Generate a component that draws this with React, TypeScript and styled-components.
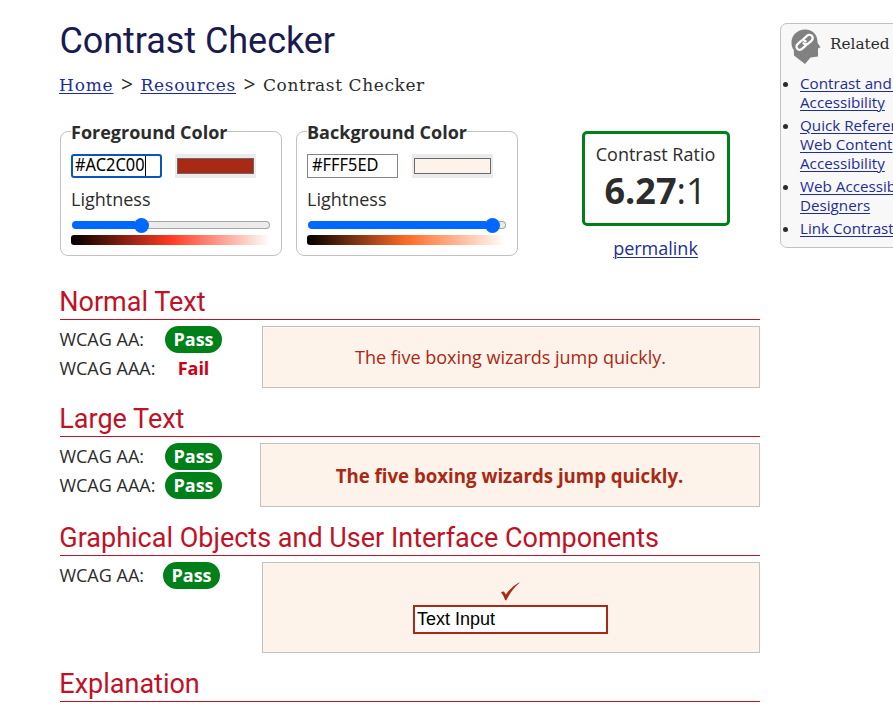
import React from "react";
import styled, { createGlobalStyle } from "styled-components";

const GlobalStyle = createGlobalStyle`
  * { box-sizing: border-box; }
  html, body { margin: 0; background: #fff; overflow: hidden; }
  body { font-family: "Open Sans", sans-serif; font-size: 18px; color: #2c2c2c; }
`;

const Page = styled.div`
  width: 893px;
  height: 712px;
  overflow: hidden;
  display: flex;
  align-items: flex-start;
  gap: 20px;
  padding-left: 60px;
`;
const Main = styled.main`
  flex: 0 0 700px;
`;
const Title = styled.h1`
  margin: 0;
  padding-top: 20px;
  font: 400 36px/42px Roboto, sans-serif;
  color: #1a1a50;
  white-space: nowrap;
  height: 72px;
  letter-spacing: -0.05px;
  text-indent: -0.6px;
`;
const Breadcrumb = styled.nav`
  height: 48px;
  font: 400 17px/26px "DejaVu Serif", serif;
  white-space: nowrap;
  display: flex;
  gap: 7px;
  margin-left: -1px;
`;
const Link = styled.a`
  color: #1f2d96;
  text-decoration: underline;
  text-decoration-thickness: 1px;
  text-underline-offset: 2px;
`;
const Crumb = styled.span<{ $spacing: number }>`
  letter-spacing: ${(p) => p.$spacing}px;
`;
const Separator = styled.span`
  width: 13px;
  text-align: center;
  font: 400 21px/25px "Open Sans", sans-serif;
`;
const Controls = styled.div`
  display: flex;
  align-items: flex-start;
  height: 168px;
`;
const ColorField = styled.fieldset`
  margin: 0 14px 0 0;
  width: 222px;
  height: 136px;
  min-width: 0;
  padding: 0 10px;
  border: 1px solid #c2c2c2;
  border-radius: 8px;
`;
const Legend = styled.legend`
  padding: 0;
  font-weight: 700;
  line-height: 24px;
  height: 23px;
  white-space: nowrap;
`;
const InputRow = styled.div<{ $gap: number }>`
  display: flex;
  gap: ${(p) => p.$gap}px;
  padding-top: 11px;
`;
const HexInput = styled.div<{ $focused?: boolean }>`
  width: 91px;
  height: 24px;
  padding-left: ${(p) => (p.$focused ? 2 : 4)}px;
  border: ${(p) => (p.$focused ? "2px solid #0a55bd" : "1px solid #858585")};
  border-radius: ${(p) => (p.$focused ? 3 : 0)}px;
  color: #000;
  font: 400 18px/${(p) => (p.$focused ? 17 : 19)}px "Noto Sans", sans-serif;
  white-space: nowrap;
  display: flex;
`;
const HexText = styled.span`
  display: inline-block;
  transform: scaleX(0.91);
  transform-origin: 0 50%;
`;
const Caret = styled.span<{ $offset: number }>`
  width: 1px;
  height: 20px;
  margin-left: ${(p) => p.$offset}px;
  background: #000;
`;
const Swatch = styled.div`
  width: 81px;
  height: 24px;
  padding: 4px 2px;
  background: #ebebeb;
`;
const SwatchFill = styled.div<{ $color: string }>`
  height: 16px;
  border: 1px solid #6a6a6a;
  background: ${(p) => p.$color};
`;
const Label = styled.div`
  height: 39px;
  padding-top: 9px;
  line-height: 24px;
`;
const Slider = styled.div`
  display: flex;
  align-items: center;
  height: 16px;
  margin-left: 1px;
  width: 198px;
`;
const Filled = styled.div<{ $width: number }>`
  width: ${(p) => p.$width}px;
  height: 8px;
  border-radius: 4px 0 0 4px;
  background: #0067ff;
`;
const Thumb = styled.div`
  width: 15px;
  height: 15px;
  margin: 0 -1px;
  border-radius: 50%;
  background: #0067ff;
  z-index: 1;
`;
const Rest = styled.div`
  flex: 1;
  height: 8px;
  border: 1px solid #a6a6a6;
  border-left: 0;
  border-radius: 0 4px 4px 0;
  background: #ebebeb;
`;
const Gradient = styled.div<{ $mid: string }>`
  width: 199px;
  height: 10px;
  margin-top: 2px;
  border-radius: 3px;
  background: linear-gradient(to right, #000, ${(p) => p.$mid} 50%, #fff);
`;
const RatioColumn = styled.div`
  width: 148px;
  margin: 11px 0 0 50px;
  text-align: center;
`;
const RatioBox = styled.div`
  height: 95px;
  border: 3px solid #008019;
  border-radius: 5px;
  padding: 8px 1px 0 0;
  line-height: 24px;
  white-space: nowrap;
`;
const RatioValue = styled.div`
  font-size: 36px;
  line-height: 49px;
`;
const Permalink = styled(Link)`
  display: block;
  margin: 10px 1px 0 0;
  line-height: 24px;
`;
const SectionTitle = styled.h2`
  margin: 0;
  height: 32px;
  font: 400 27px/29px Roboto, sans-serif;
  color: #bf1226;
  border-bottom: 1px solid #bf1226;
  white-space: nowrap;
  text-indent: -0.7px;
`;
const Section = styled.section<{ $height: number }>`
  height: ${(p) => p.$height}px;
`;
const SectionBody = styled.div`
  display: flex;
  justify-content: space-between;
  padding-top: 6px;
`;
const Results = styled.div`
  display: flex;
  flex-direction: column;
  gap: 2px;
`;
const Result = styled.div<{ $label: number }>`
  display: grid;
  grid-template-columns: ${(p) => p.$label}px 57px;
  height: 27px;
  line-height: 27px;
  white-space: nowrap;
`;
const ResultLabel = styled.span`
  text-indent: -0.6px;
`;
const Badge = styled.strong<{ $pass: boolean }>`
  border-radius: 14px;
  text-align: center;
  background: ${(p) => (p.$pass ? "#008019" : "transparent")};
  color: ${(p) => (p.$pass ? "#fff" : "#cf0015")};
`;
const Sample = styled.div<{ $width: number; $height: number; $bold?: boolean }>`
  width: ${(p) => p.$width}px;
  height: ${(p) => p.$height}px;
  padding-right: 1px;
  display: flex;
  flex-direction: column;
  align-items: center;
  justify-content: center;
  border: 1px solid #c2c2c2;
  background: #fef3eb;
  color: #a82914;
  font-weight: ${(p) => (p.$bold ? 700 : 400)};
  font-size: ${(p) => (p.$bold ? 18.67 : 18)}px;
  white-space: nowrap;
`;
const Check = styled.svg`
  width: 20px;
  height: 19px;
  margin: 0 1px 4px 0;
`;
const TextInput = styled.div`
  width: 195px;
  height: 29px;
  padding-left: 2px;
  border: 2px solid #a82914;
  background: #fff;
  color: #000;
  font: 400 18px/25px "Liberation Sans", sans-serif;
`;
const Aside = styled.aside`
  flex: 0 0 220px;
  height: 225px;
  margin-top: 23px;
  border: 1px solid #c2c2c2;
  border-radius: 7px;
  background: #f8f8f8;
`;
const AsideTitle = styled.h2`
  margin: 0;
  height: 50px;
  padding: 5px 0 0 10px;
  display: flex;
  gap: 9px;
  font: 400 15.3px/30px "DejaVu Serif", serif;
  white-space: nowrap;
`;
const LinkList = styled.ul`
  margin: 0;
  padding: 0 0 0 19px;
  font-size: 15.2px;
  line-height: 19px;
  white-space: nowrap;
`;
const LinkItem = styled.li`
  margin-bottom: 4px;
`;

function HeadIcon() {
  return (
    <svg width="30" height="36" viewBox="0 0 30 36">
      <path
        d="M14 0.5C21 0.5 26 5 26.4 11.5L26.6 14L29.5 18.3L27 19.4L27 27.5L19.5 28.5L14 35L3 26.5L2.8 21C1.2 19 0.5 16.5 0.5 13.5C0.5 6 6.5 0.5 14 0.5Z"
        fill="#818181"
      />
      <g transform="translate(13.6 13.3) rotate(-42)" fill="none" stroke="#fff" strokeWidth="2.3" strokeLinecap="round">
        <path d="M-1 3.2H-6.4A3.3 3.3 0 0 1-6.4-3.4H-2.4A3.4 3.4 0 0 1 1.4 0" />
        <path d="M1-3.2H6.4A3.3 3.3 0 0 1 6.4 3.4H2.4A3.4 3.4 0 0 1-1.4 0" />
      </g>
    </svg>
  );
}

interface PickerProps {
  title: string;
  hex: string;
  color: string;
  mid: string;
  fill: number;
  gap: number;
  focused?: boolean;
}

function ColorPicker({ title, hex, color, mid, fill, gap, focused }: PickerProps) {
  return (
    <ColorField>
      <Legend>{title}</Legend>
      <InputRow $gap={gap}>
        <HexInput $focused={focused}>
          <HexText>{hex}</HexText>
          {focused && <Caret $offset={-6} />}
        </HexInput>
        <Swatch>
          <SwatchFill $color={color} />
        </Swatch>
      </InputRow>
      <Label>Lightness</Label>
      <Slider>
        <Filled $width={fill} />
        <Thumb />
        <Rest />
      </Slider>
      <Gradient $mid={mid} />
    </ColorField>
  );
}

function ResultRow({ level, pass, label = 105 }: { level: string; pass: boolean; label?: number }) {
  return (
    <Result $label={label}>
      <ResultLabel>WCAG {level}:</ResultLabel>
      <Badge $pass={pass}>{pass ? "Pass" : "Fail"}</Badge>
    </Result>
  );
}

const related = [
  ["Contrast and Color", "Accessibility"],
  ["Quick Reference:", "Web Content", "Accessibility"],
  ["Web Accessibility for", "Designers"],
  ["Link Contrast Checker"],
];

export default function App() {
  return (
    <>
      <GlobalStyle />
      <Page>
        <Main>
          <Title>Contrast Checker</Title>
          <Breadcrumb>
            <Crumb $spacing={0.8}><Link>Home</Link></Crumb>
            <Separator>&gt;</Separator>
            <Crumb $spacing={0.7}><Link>Resources</Link></Crumb>
            <Separator>&gt;</Separator>
            <Crumb $spacing={0.6}>Contrast Checker</Crumb>
          </Breadcrumb>
          <Controls>
            <ColorPicker title="Foreground Color" hex="#AC2C00" color="#a82914" mid="#ff3a20" fill={63} gap={13} focused />
            <ColorPicker title="Background Color" hex="#FFF5ED" color="#fef3eb" mid="#ff6a26" fill={178} gap={14} />
            <RatioColumn>
              <RatioBox>
                Contrast Ratio
                <RatioValue><b>6.27</b>:1</RatioValue>
              </RatioBox>
              <Permalink>permalink</Permalink>
            </RatioColumn>
          </Controls>
          <Section $height={117}>
            <SectionTitle>Normal Text</SectionTitle>
            <SectionBody>
              <Results>
                <ResultRow level="AA" pass />
                <ResultRow level="AAA" pass={false} />
              </Results>
              <Sample $width={498} $height={62}>The five boxing wizards jump quickly.</Sample>
            </SectionBody>
          </Section>
          <Section $height={119}>
            <SectionTitle>Large Text</SectionTitle>
            <SectionBody>
              <Results>
                <ResultRow level="AA" pass />
                <ResultRow level="AAA" pass />
              </Results>
              <Sample $width={500} $height={64} $bold>The five boxing wizards jump quickly.</Sample>
            </SectionBody>
          </Section>
          <Section $height={146}>
            <SectionTitle>Graphical Objects and User Interface Components</SectionTitle>
            <SectionBody>
              <Results>
                <ResultRow level="AA" pass label={103} />
              </Results>
              <Sample $width={498} $height={91}>
                <Check viewBox="0 0 20 19">
                  <path d="M1 10.3Q3.8 8.6 4.8 10.8L5.9 12.6Q11 4.5 19 .4L19.6 .8Q12 7 6.3 18.3H5.2Q3.5 13.3 1 10.3Z" fill="#a82914" />
                </Check>
                <TextInput>Text Input</TextInput>
              </Sample>
            </SectionBody>
          </Section>
          <SectionTitle>Explanation</SectionTitle>
        </Main>
        <Aside>
          <AsideTitle>
            <HeadIcon />
            Related Resources
          </AsideTitle>
          <LinkList>
            {related.map((lines) => (
              <LinkItem key={lines[0]}>
                <Link>
                  {lines.map((line, i) => (
                    <React.Fragment key={line}>
                      {i > 0 && <br />}
                      {line}
                    </React.Fragment>
                  ))}
                </Link>
              </LinkItem>
            ))}
          </LinkList>
        </Aside>
      </Page>
    </>
  );
}
